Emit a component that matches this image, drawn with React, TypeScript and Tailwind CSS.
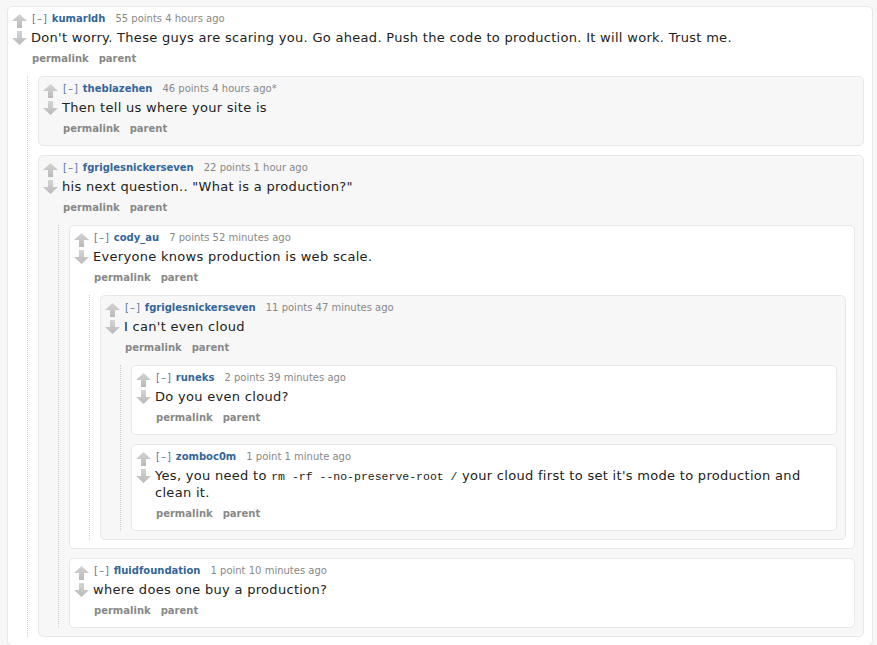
import React from "react";

type Comment = {
  author: string;
  points: string;
  time: string;
  body: React.ReactNode;
  children?: Comment[];
};

const thread: Comment = {
  author: "kumarldh",
  points: "55 points",
  time: "4 hours ago",
  body: "Don't worry. These guys are scaring you. Go ahead. Push the code to production. It will work. Trust me.",
  children: [
    {
      author: "theblazehen",
      points: "46 points",
      time: "4 hours ago*",
      body: "Then tell us where your site is",
    },
    {
      author: "fgriglesnickerseven",
      points: "22 points",
      time: "1 hour ago",
      body: 'his next question.. "What is a production?"',
      children: [
        {
          author: "cody_au",
          points: "7 points",
          time: "52 minutes ago",
          body: "Everyone knows production is web scale.",
          children: [
            {
              author: "fgriglesnickerseven",
              points: "11 points",
              time: "47 minutes ago",
              body: "I can't even cloud",
              children: [
                {
                  author: "runeks",
                  points: "2 points",
                  time: "39 minutes ago",
                  body: "Do you even cloud?",
                },
                {
                  author: "zomboc0m",
                  points: "1 point",
                  time: "1 minute ago",
                  body: (
                    <>
                      Yes, you need to{" "}
                      <code className="font-['Liberation_Mono',monospace] text-[11.5px] tracking-normal">
                        rm -rf --no-preserve-root /
                      </code>{" "}
                      your cloud first to set it's mode to production and clean it.
                    </>
                  ),
                },
              ],
            },
          ],
        },
        {
          author: "fluidfoundation",
          points: "1 point",
          time: "10 minutes ago",
          body: "where does one buy a production?",
        },
      ],
    },
  ],
};

function Arrow({ down }: { down?: boolean }) {
  return (
    <svg width="15" height="14" viewBox="0 0 15 14" className="block">
      <defs>
        <linearGradient id={down ? "gd" : "gu"} x1="0" y1="0" x2="0" y2="1">
          <stop offset="0" stopColor="#d4d4d4" />
          <stop offset="1" stopColor="#b9b9b9" />
        </linearGradient>
      </defs>
      <polygon
        points={down ? "7.5,14 15,7 10,7 10,0 5,0 5,7 0,7" : "7.5,0 15,7 10,7 10,14 5,14 5,7 0,7"}
        fill={`url(#${down ? "gd" : "gu"})`}
      />
    </svg>
  );
}

function CommentBox({ c, depth }: { c: Comment; depth: number }) {
  const bg = depth % 2 === 0 ? "bg-white" : "bg-[#f7f7f7]";
  return (
    <div className={`${bg} border border-[#e8e8e8] rounded-[5px] pt-[4px] pb-[8px]`}>
      <div className="flex">
        <div className="w-[19px] pl-[4px] pt-[3px] flex flex-col gap-[3px] shrink-0">
          <Arrow />
          <Arrow down />
        </div>
        <div className="pl-[4px] pr-3 min-w-0">
          <div className="text-[10px] leading-[16px] text-[#888] pl-[1px]">
            <span className="text-[#5a78a0] tracking-[1px] mr-[4px]">[–]</span>
            <span className="font-bold text-[#336699] mr-[10px]">{c.author}</span>
            {c.points} {c.time}
          </div>
          <div className="mt-[3px] text-[13px] tracking-[0.3px] leading-[16px] text-[#222]">{c.body}</div>
          <div className="mt-[5px] text-[10px] leading-[16px] font-bold text-[#888] flex gap-[10px] pl-[1px]">
            <span>permalink</span>
            <span>parent</span>
          </div>
        </div>
      </div>
      {c.children && (
        <div className="mt-[9px] ml-[19px] mr-[8px] border-l border-dotted border-[#ccd] pl-[10px] flex flex-col gap-[9px]">
          {c.children.map((ch, i) => (
            <CommentBox key={i} c={ch} depth={depth + 1} />
          ))}
        </div>
      )}
    </div>
  );
}

export default function App() {
  return (
    <div className="min-h-[645px] bg-[#f7f7f7] pt-[6px] pl-[7px] pr-[4px] font-['DejaVu_Sans',Verdana,sans-serif]">
      <CommentBox c={thread} depth={0} />
    </div>
  );
}
